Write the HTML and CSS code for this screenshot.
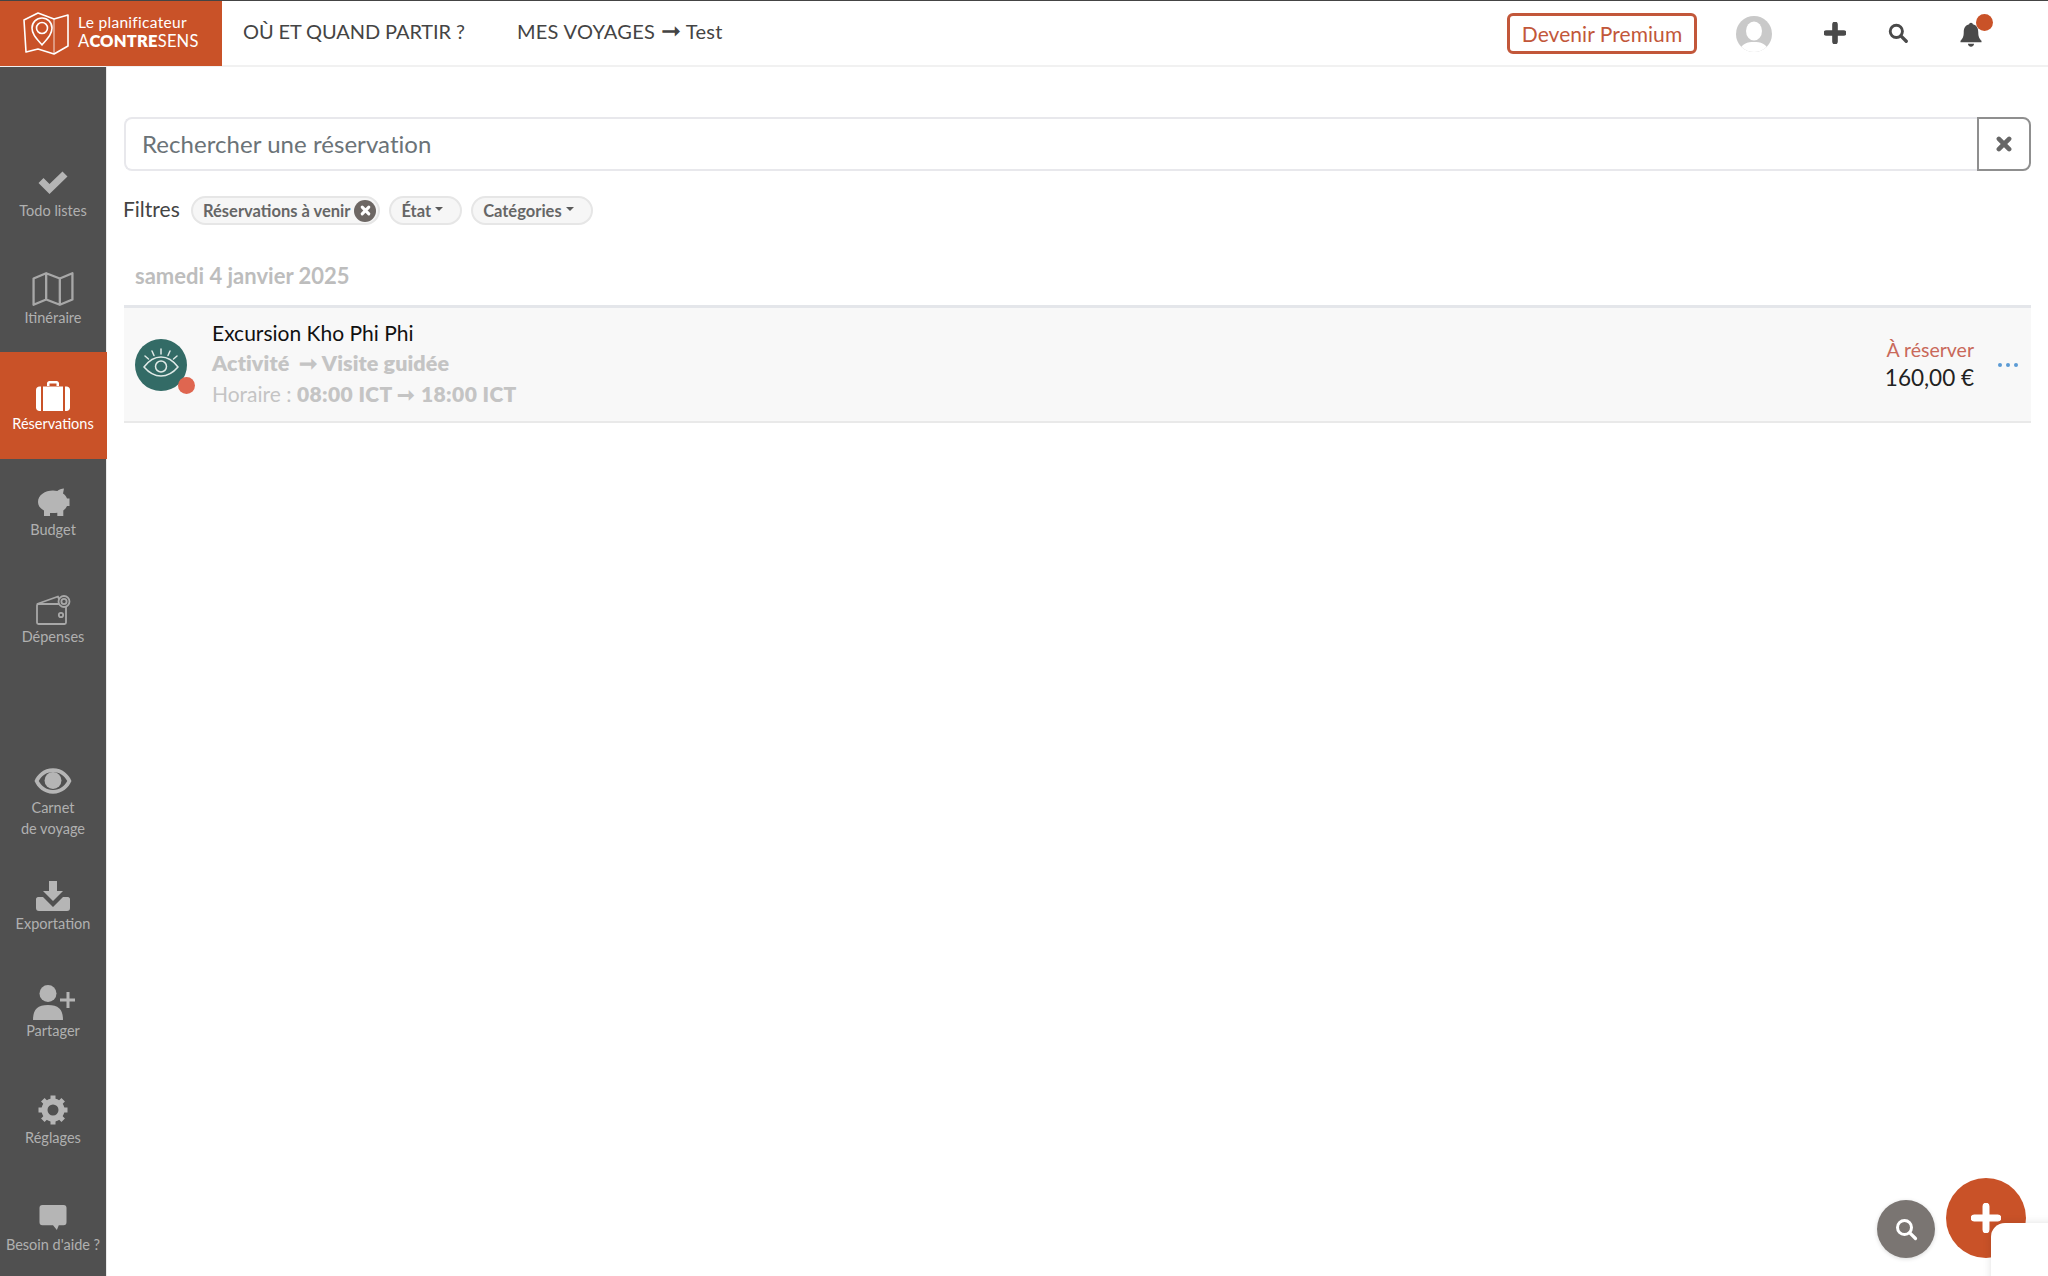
FILE: index.html
```html
<!DOCTYPE html>
<html lang="fr">
<head>
<meta charset="utf-8">
<title>Réservations</title>
<link rel="stylesheet" href="styles.css">
</head>
<body>
<header class="topbar">
  <a class="logo">
    <svg class="logo-mark" viewBox="0 0 46 44" fill="none" stroke="#fff" stroke-width="1.6" stroke-linejoin="round">
      <path d="M1 8 L15 1 L31 7 L45 3 V34 L31 42 L15 37 L3 40 Z"/>
      <path d="M31 7 V42" opacity=".5"/>
      <path d="M19 33 C13 26 9 22 9 16 A10 10 0 0 1 29 16 C29 22 25 26 19 33 Z"/>
      <circle cx="19" cy="16" r="5.5"/>
    </svg>
    <span class="logo-text">
      <span class="logo-top">Le planificateur</span>
      <span class="logo-bottom">A<b>CONTRE</b>SENS</span>
    </span>
  </a>
  <nav class="topnav">
    <a>OÙ ET QUAND PARTIR ?</a>
    <a>MES VOYAGES <span class="nav-arrow">➞</span> Test</a>
  </nav>
  <div class="top-actions">
    <a class="premium">Devenir Premium</a>
    <svg class="avatar" viewBox="0 0 36 36"><defs><clipPath id="av"><circle cx="18" cy="18" r="18"/></clipPath></defs><circle cx="18" cy="18" r="18" fill="#c9c9c9"/><g clip-path="url(#av)" fill="#fff"><ellipse cx="18" cy="15" rx="8" ry="9.5"/><path d="M3 36 C5 27 12 26 18 26 C24 26 31 27 33 36 Z"/></g></svg>
    <svg class="ic-plus" viewBox="0 0 18 18"><path d="M9 2v14M2 9h14" stroke="#4a4a4a" stroke-width="4.6" stroke-linecap="round"/></svg>
    <svg class="ic-search" viewBox="0 0 18 18" fill="none" stroke="#4a4a4a"><circle cx="7.5" cy="7.5" r="5.5" stroke-width="2.6"/><path d="M11.6 11.6 L16.4 16.4" stroke-width="3" stroke-linecap="round"/></svg>
    <span class="bell">
      <svg viewBox="0 0 22 24" fill="#4a4a4a"><path d="M11 1.5c1 0 1.7.7 1.7 1.6 3.4.8 5 3.6 5 7.2 0 4.6 1.3 6 3 8v1.2H1.300v-1.200c1.700-2 3-3.400 3-8 0-3.600 1.600-6.400 5-7.200 0-.9.700-1.600 1.700-1.600zM8.200 21h5.600c0 1.600-1.200 2.700-2.800 2.700S8.200 22.600 8.200 21z"/></svg>
      <i class="bell-dot"></i>
    </span>
  </div>
</header>

<div class="layout">
  <aside class="sidebar">
    <div class="side-group">
      <a class="side-item item-todo item-lift">
        <svg class="side-ic" viewBox="0 0 32 32" fill="#b5b5b5"><path d="M12.500 26 L1.500 15 L6.500 10 L12.500 16 L25.500 3.500 L30.500 8.500 Z"/></svg>
        <span>Todo listes</span>
      </a>
      <a class="side-item item-map item-lift">
        <svg class="side-ic" viewBox="0 0 40 34" fill="none" stroke="#a8a8a8" stroke-width="2.200" stroke-linejoin="round"><path d="M1.500 7 L13.500 2 L26.500 7 L38.500 2 V27 L26.500 32 L13.500 27 L1.500 32 Z M13.500 2 V27 M26.500 7 V32"/></svg>
        <span>Itinéraire</span>
      </a>
      <a class="side-item is-active">
        <svg class="side-ic" viewBox="0 0 36 32" fill="#fff"><path d="M12 6V3.500C12 2 13 1 14.500 1h7C23 1 24 2 24 3.500V6h-2.500V3.500h-7V6zM1 10c0-2.200 1.500-3.500 3.500-3.500H6V31H4.500C2.500 31 1 29.700 1 27.500zM8 6.500h20V31H8zM30 6.500h1.500C33.500 6.500 35 7.800 35 10v17.500c0 2.200-1.500 3.500-3.500 3.500H30z"/></svg>
        <span>Réservations</span>
      </a>
      <a class="side-item item-lift">
        <svg class="side-ic" viewBox="0 0 36 32" fill="#b5b5b5"><path d="M3 15C3 8 10 3.500 18 3.500c1.500 0 3 .2 4.300.5C24 2.500 26.500 1.500 29 1.500l-1 5c2 1.300 3.300 3 4 5h2.500V19H32c-.8 1.800-2 3.300-3.700 4.500V29h-6v-3.200c-1.300.2-2.800.3-4.300.3-1 0-2 0-3-.2V29H9v-5.500C5 21.500 3 18.500 3 15z"/></svg>
        <span>Budget</span>
      </a>
      <a class="side-item item-lift">
        <svg class="side-ic" viewBox="0 0 36 32" fill="none" stroke="#a8a8a8" stroke-width="1.800" stroke-linejoin="round"><path d="M2 10 L23 2.500 L25 8"/><rect x="2" y="10" width="29" height="20" rx="1.500"/><circle cx="26" cy="21" r="2.200"/><circle cx="29" cy="7.500" r="5.500" fill="#505050"/><circle cx="29" cy="7.500" r="2.600"/></svg>
        <span>Dépenses</span>
      </a>
    </div>
    <div class="side-group side-bottom">
      <a class="side-item item-carnet">
        <svg class="side-ic" viewBox="0 0 36 26" fill="#b5b5b5"><path fill-rule="evenodd" d="M18 1C27 1 33 7 35.500 13 33 19 27 25 18 25S3 19 .5 13C3 7 9 1 18 1zm0 3.500C11.500 4.500 7 8.500 4.500 13 7 17.500 11.500 21.500 18 21.500S29 17.500 31.500 13C29 8.500 24.500 4.500 18 4.500z"/><circle cx="18" cy="12.500" r="8"/></svg>
        <span>Carnet<br>de voyage</span>
      </a>
      <a class="side-item">
        <svg class="side-ic" viewBox="0 0 34 32" fill="#b5b5b5"><path d="M13 1h8v10h6L17 21 7 11h6z"/><path fill-rule="evenodd" d="M7 17l10 10 10-10h5c1 0 2 1 2 2v9c0 2-1 3-3 3H3c-2 0-3-1-3-3v-9c0-1 1-2 2-2z"/></svg>
        <span>Exportation</span>
      </a>
      <a class="side-item item-share">
        <svg class="side-ic" viewBox="0 0 44 36" fill="#b5b5b5"><circle cx="17" cy="9.500" r="8.500"/><path d="M2 36c0-10 4-15 15-15s15 5 15 15z"/><path d="M37 8v16M29 16h15" stroke="#b5b5b5" stroke-width="3" fill="none"/></svg>
        <span>Partager</span>
      </a>
      <a class="side-item">
        <svg class="side-ic" viewBox="0 0 32 32" fill="none" stroke="#b5b5b5"><circle cx="16" cy="16" r="8.500" stroke-width="6"/><path d="M16 1.500v5M16 25.500v5M1.500 16h5M25.500 16h5M5.800 5.800l3.500 3.500M22.700 22.700l3.500 3.500M5.800 26.200l3.500-3.500M22.700 9.300l3.500-3.500" stroke-width="5"/></svg>
        <span>Réglages</span>
      </a>
      <a class="side-item item-help">
        <svg class="side-ic" viewBox="0 0 30 28" fill="#b5b5b5"><path d="M4 1h22c2 0 3 1 3 3v15c0 2-1 3-3 3h-5l-2 5-4-5H4c-2 0-3-1-3-3V4c0-2 1-3 3-3z"/></svg>
        <span>Besoin d'aide ?</span>
      </a>
    </div>
  </aside>

  <main class="content">
    <div class="search">
      <div class="search-input">Rechercher une réservation</div>
      <button class="search-clear">
        <svg viewBox="0 0 14 14"><path d="M2.500 2.500l9 9M11.500 2.500l-9 9" stroke="#666" stroke-width="4" stroke-linecap="round"/></svg>
      </button>
    </div>

    <div class="filters">
      <span class="filters-label">Filtres</span>
      <span class="chip chip-active">Réservations à venir
        <i class="chip-x"><svg viewBox="0 0 10 10"><path d="M2 2l6 6M8 2l-6 6" stroke="#fff" stroke-width="2.800" stroke-linecap="round"/></svg></i>
      </span>
      <span class="chip">État<i class="caret"></i></span>
      <span class="chip">Catégories<i class="caret"></i></span>
    </div>

    <h2 class="day">samedi 4 janvier 2025</h2>

    <article class="booking">
      <div class="booking-icon">
        <svg viewBox="0 0 52 52" fill="none" stroke="#dfe9e6" stroke-width="1.500" stroke-linecap="round">
          <path d="M9 28 C15 20 21 18 26 18 S37 20 43 28 C37 35 31 37 26 37 S15 35 9 28 Z"/>
          <circle cx="26" cy="27.500" r="5.500"/>
          <path d="M26 10v5M17 12l2 4.500M35 12l-2 4.500M10 17l3.500 3M42 17l-3.500 3"/>
        </svg>
        <i class="booking-dot"></i>
      </div>
      <div class="booking-body">
        <div class="booking-title">Excursion Kho Phi Phi</div>
        <div class="booking-type">Activité &nbsp;➞ Visite guidée</div>
        <div class="booking-time">Horaire : <b>08:00 ICT ➞ 18:00 ICT</b></div>
      </div>
      <div class="booking-side">
        <div class="booking-state">À réserver</div>
        <div class="booking-price">160,00 €</div>
      </div>
      <div class="booking-more"><i></i><i></i><i></i></div>
    </article>
  </main>
</div>

<button class="fab fab-search">
  <svg viewBox="0 0 24 24" fill="none" stroke="#fff"><circle cx="10.500" cy="10.500" r="7" stroke-width="3"/><path d="M15.800 15.800 L21.500 21.500" stroke-width="3.200" stroke-linecap="round"/></svg>
</button>
<button class="fab fab-add">
  <svg viewBox="0 0 28 28"><path d="M14 3v22M3 14h22" stroke="#fff" stroke-width="6.500" stroke-linecap="round"/></svg>
</button>
<div class="corner-panel"></div>
</body>
</html>
```
FILE: styles.css
```css
* { box-sizing: border-box; }
html, body { margin: 0; height: 100%; }
body {
  width: 2048px;
  height: 1276px;
  overflow: hidden;
  position: relative;
  background: #fff;
  color: #444;
  font-family: "Lato", "Open Sans", sans-serif;
}
a { color: inherit; text-decoration: none; }

.topbar {
  display: flex;
  align-items: center;
  height: 67px;
  border-top: 1px solid #444;
  border-bottom: 2px solid #f1f1f1;
}
.logo {
  display: flex;
  align-items: center;
  gap: 9px;
  width: 222px;
  height: 65px;
  margin-bottom: -1px;
  padding-left: 23px;
  background: #c95228;
  color: #fff;
}
.logo-mark { width: 46px; height: 44px; flex: none; }
.logo-text { display: flex; flex-direction: column; line-height: 19px; margin-top: -3px; }
.logo-top { font-size: 15.500px; letter-spacing: .3px; }
.logo-bottom { font-size: 16.500px; letter-spacing: .2px; }
.logo-bottom b { font-weight: 800; }

.topnav {
  display: flex;
  gap: 52px;
  margin-left: 21px;
  margin-top: -4px;
  font-size: 20px;
  color: #444;
}
.topnav a:first-child { letter-spacing: -.1px; }
.topnav a:last-child { letter-spacing: .3px; }
.nav-arrow { font-size: 24px; line-height: 20px; }
.top-actions {
  display: flex;
  align-items: center;
  margin-left: auto;
  height: 100%;
}
.premium {
  display: flex;
  align-items: center;
  justify-content: center;
  width: 190px;
  height: 41px;
  border: 3px solid #c2573a;
  border-radius: 6px;
  color: #c2573a;
  font-size: 21px;
  letter-spacing: .05px;
}
.avatar { width: 36px; height: 36px; margin-left: 39px; margin-top: 1px; }
.ic-plus { width: 22px; height: 22px; margin-left: 52px; }
.ic-search { width: 20px; height: 20px; margin-left: 42px; }
.bell { position: relative; width: 24px; height: 26px; margin-left: 51px; margin-right: 65px; margin-top: 2px; }
.bell svg { width: 100%; height: 100%; display: block; }
.bell-dot {
  position: absolute;
  top: -7px;
  left: 17px;
  width: 17px;
  height: 17px;
  border-radius: 50%;
  background: #c95228;
}

.layout { display: flex; height: 1209px; }
.sidebar {
  display: flex;
  flex-direction: column;
  flex: none;
  width: 107px;
  height: 1209px;
  padding-top: 71px;
  background: #505050;
  border-right: 1px solid #e9e9e9;
  color: #b0b0b0;
  font-size: 14.500px;
}
.side-group { display: flex; flex-direction: column; }
.side-bottom { margin-top: 72px; }
.side-item {
  display: flex;
  flex-direction: column;
  align-items: center;
  justify-content: flex-start;
  height: 107px;
  padding-top: 28px;
  text-align: center;
  line-height: 21px;
}
.side-item span { margin-top: auto; margin-bottom: 25px; }
.item-lift span { margin-bottom: 26px; }
.item-todo { padding-top: 30px; }
.item-map { padding-top: 26px; }
.item-map .side-ic { height: 36px; width: 42px; }
.item-carnet { padding-top: 20px; }
.item-carnet span { margin-bottom: 17px; }
.item-share { padding-top: 25px; }
.item-share .side-ic { width: 44px; height: 36px; }
.item-help { padding-top: 31px; }
.item-help .side-ic { width: 30px; height: 27px; }
.side-ic { width: 38px; height: 32px; flex: none; }
.is-active { background: #c95228; color: #fff; margin-right: -1px; padding-right: 1px; }

.content { flex: 1; padding: 50px 17px 0; min-width: 0; }
.search { display: flex; height: 54px; }
.search-input {
  flex: 1;
  display: flex;
  align-items: center;
  padding: 0 0 2px 16px;
  border: 2px solid #e8e8ec;
  border-right: 0;
  border-radius: 8px 0 0 8px;
  font-size: 24px;
  letter-spacing: .05px;
  color: #6b7378;
}
.search-clear {
  display: flex;
  align-items: center;
  justify-content: center;
  width: 54px;
  padding: 0;
  background: #fff;
  border: 2px solid #8f8f8f;
  border-radius: 0 8px 8px 0;
}
.search-clear svg { width: 16px; height: 16px; }

.filters {
  display: flex;
  align-items: center;
  height: 30px;
  margin-top: 24px;
}
.filters-label { width: 67px; font-size: 21px; color: #444; margin: -3px 0 0 -1px; }
.chip {
  display: flex;
  align-items: center;
  height: 29px;
  margin: 1px 9px 0 0;
  padding: 0 17px 0 10px;
  background: #f6f6f6;
  border: 2px solid #e6e6e6;
  border-radius: 15px;
  font-size: 16.500px;
  font-weight: 700;
  color: #666;
}
.filters-label + .chip { margin-left: 1px; }
.chip-active { padding-right: 2px; gap: 4px; }
.chip-x {
  display: flex;
  align-items: center;
  justify-content: center;
  width: 22px;
  height: 22px;
  border-radius: 50%;
  background: #6d6764;
}
.chip-x svg { width: 11px; height: 11px; }
.caret {
  width: 0;
  height: 0;
  margin-left: 4px;
  margin-top: -3px;
  border: 4px solid transparent;
  border-top-color: #5a5a5a;
  border-bottom: 0;
}

.day {
  margin: 36px 0 0;
  padding-left: 11px;
  height: 30px;
  font-size: 22px;
  line-height: 30px;
  font-weight: 700;
  color: #bdbdbd;
}
.booking {
  display: flex;
  align-items: center;
  height: 118px;
  margin-top: 14px;
  padding: 0 12px 0 11px;
  background: #f8f8f8;
  border-top: 3px solid #e4e6ea;
  border-bottom: 2px solid #e9e9e9;
}
.booking-icon {
  position: relative;
  flex: none;
  width: 52px;
  height: 52px;
  border-radius: 50%;
  background: #336b66;
}
.booking-icon svg { display: block; width: 52px; height: 52px; }
.booking-dot {
  position: absolute;
  right: -8px;
  bottom: -3px;
  width: 17px;
  height: 17px;
  border-radius: 50%;
  background: #df6650;
}
.booking-body { flex: 1; margin: -2px 0 0 25px; font-size: 20.500px; line-height: 30.500px; }
.booking-title { color: #111; font-size: 21px; }
.booking-type { font-weight: 800; color: #c4c4c4; font-size: 21.500px; letter-spacing: .1px; }
.booking-time { color: #c4c4c4; font-size: 21px; }
.booking-time b { font-weight: 800; letter-spacing: .4px; }
.booking-side { text-align: right; line-height: 28px; margin-top: -2px; }
.booking-state { font-size: 19.500px; color: #c9695a; }
.booking-price { font-size: 22.500px; color: #222; }
.booking-more {
  display: flex;
  gap: 4px;
  margin-left: 24px;
  margin-right: 1px;
}
.booking-more i {
  width: 4px;
  height: 4px;
  border-radius: 50%;
  background: #5b9bd5;
}

.fab {
  position: absolute;
  display: flex;
  align-items: center;
  justify-content: center;
  padding: 0;
  border: 0;
  border-radius: 50%;
}
.fab-search {
  left: 1877px;
  top: 1200px;
  width: 58px;
  height: 58px;
  background: #7a7572;
  box-shadow: 0 1px 4px rgba(0,0,0,.15);
}
.fab-search svg { width: 24px; height: 24px; }
.fab-add {
  left: 1946px;
  top: 1178px;
  width: 80px;
  height: 80px;
  background: #c95228;
}
.fab-add svg { width: 30px; height: 30px; }
.corner-panel {
  position: absolute;
  left: 1991px;
  top: 1223px;
  width: 80px;
  height: 80px;
  background: #fff;
  border-radius: 14px 0 0 0;
  box-shadow: 0 0 8px rgba(0,0,0,.12);
}
```
